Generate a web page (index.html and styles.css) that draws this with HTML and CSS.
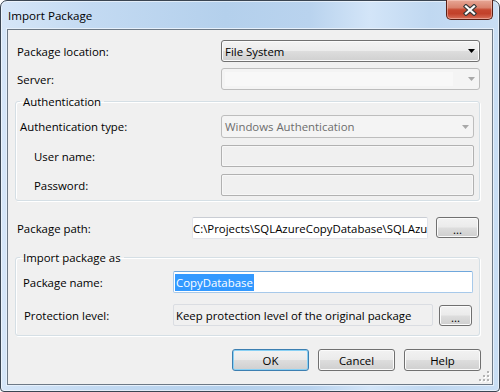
FILE: index.html
```html
<!DOCTYPE html>
<html>
<head>
<meta charset="utf-8">
<title>Import Package</title>
<link rel="stylesheet" href="styles.css">
</head>
<body>
<div class="window">
  <div class="titlebar">
    <span class="title">Import Package</span>
    <div class="close">
      <svg width="14" height="12" viewBox="0 0 14 12">
        <path d="M3 2.5 L11 9.5 M11 2.5 L3 9.5" stroke="#3a3a3a" stroke-width="4.4" stroke-linecap="square" fill="none"/>
        <path d="M3 2.5 L11 9.5 M11 2.5 L3 9.5" stroke="#ffffff" stroke-width="2.2" stroke-linecap="square" fill="none"/>
      </svg>
    </div>
  </div>
  <div class="client">
    <div class="row top r-loc">
      <span class="lbl lbl-top">Package location:</span>
      <div class="combo combo-active w-top">
        <span class="combo-text">File System</span>
        <svg class="arrow" width="7" height="4" viewBox="0 0 7 4"><path d="M0 0 H7 L3.5 4 Z" fill="#000"/></svg>
      </div>
    </div>
    <div class="row top r-server">
      <span class="lbl lbl-top">Server:</span>
      <div class="combo combo-disabled w-top">
        <span class="combo-fill"></span>
        <svg class="arrow" width="7" height="4" viewBox="0 0 7 4"><path d="M0 0 H7 L3.5 4 Z" fill="#a8a8a8"/></svg>
      </div>
    </div>

    <fieldset class="group g-auth">
      <legend>Authentication</legend>
      <div class="row r-authtype">
        <span class="lbl lbl-auth">Authentication type:</span>
        <div class="combo combo-disabled w-auth">
          <span class="combo-text dis-text">Windows Authentication</span>
          <svg class="arrow" width="7" height="4" viewBox="0 0 7 4"><path d="M0 0 H7 L3.5 4 Z" fill="#a8a8a8"/></svg>
        </div>
      </div>
      <div class="row r-user">
        <span class="lbl lbl-auth indent">User name:</span>
        <div class="textbox tb-disabled w-auth"></div>
      </div>
      <div class="row r-pass">
        <span class="lbl lbl-auth indent">Password:</span>
        <div class="textbox tb-disabled w-auth"></div>
      </div>
    </fieldset>

    <div class="row top r-path">
      <span class="lbl lbl-path">Package path:</span>
      <div class="textbox tb-white w-path"><span class="tb-text tb-clip">C:\Projects\SQLAzureCopyDatabase\SQLAzu</span></div>
      <button class="btn btn-dots b-path">...</button>
    </div>

    <fieldset class="group g-import">
      <legend>Import package as</legend>
      <div class="row r-name">
        <span class="lbl lbl-imp pad3">Package name:</span>
        <div class="textbox tb-focus w-name"><span class="tb-text"><span class="sel">CopyDatabase</span></span></div>
      </div>
      <div class="row r-prot">
        <span class="lbl lbl-imp pad4">Protection level:</span>
        <div class="textbox tb-readonly w-prot"><span class="tb-text">Keep protection level of the original package</span></div>
        <button class="btn btn-dots b-prot">...</button>
      </div>
    </fieldset>

    <div class="buttons">
      <button class="btn btn-main btn-default">OK</button>
      <button class="btn btn-main">Cancel</button>
      <button class="btn btn-main">Help</button>
    </div>

    <svg class="grip" width="11" height="11" viewBox="0 0 11 11">
      <g fill="#ffffff">
        <rect x="9" y="1" width="2" height="2"/>
        <rect x="5" y="5" width="2" height="2"/><rect x="9" y="5" width="2" height="2"/>
        <rect x="1" y="9" width="2" height="2"/><rect x="5" y="9" width="2" height="2"/><rect x="9" y="9" width="2" height="2"/>
      </g>
      <g fill="#b3b3b3">
        <rect x="8" y="0" width="2" height="2"/>
        <rect x="4" y="4" width="2" height="2"/><rect x="8" y="4" width="2" height="2"/>
        <rect x="0" y="8" width="2" height="2"/><rect x="4" y="8" width="2" height="2"/><rect x="8" y="8" width="2" height="2"/>
      </g>
    </svg>
  </div>
</div>
</body>
</html>
```

FILE: styles.css
```css
html, body {
  margin: 0;
  padding: 0;
  background: #ffffff;
}

body {
  font-family: "Open Sans", "Noto Sans", sans-serif;
  font-size: 11.4px;
  color: #000;
}

.window {
  width: 500px;
  height: 392px;
  box-sizing: border-box;
  border: 1px solid #3a4552;
  border-radius: 7px 7px 4px 4px;
  background:
    linear-gradient(to right, #d6e6f8 0%, #c3daf2 18%, #b4d0ec 45%, #b9d3ee 62%, #d3e5f8 74%, #c0d8f1 86%, #c9def4 100%);
  box-shadow: inset 0 0 0 1px rgba(255, 255, 255, 0.55);
  padding: 0 6px 6px 6px;
  display: flex;
  flex-direction: column;
}

.titlebar {
  height: 28px;
  flex: 0 0 28px;
  display: flex;
  align-items: center;
  padding-left: 1px;
}

.title {
  font-size: 11.6px;
  color: #000;
  line-height: 15px;
  padding-top: 1px;
}

.close {
  margin-left: auto;
  align-self: flex-start;
  margin-top: -1px;
  width: 47px;
  height: 20px;
  box-sizing: border-box;
  border: 1px solid #5a1f15;
  border-top: none;
  border-radius: 0 0 5px 5px;
  background: linear-gradient(#e7a796 0%, #d9826d 40%, #c6472f 52%, #c2412a 72%, #d8705a 100%);
  box-shadow: inset 0 0 0 1px rgba(255, 220, 210, 0.45);
  display: flex;
  align-items: center;
  justify-content: center;
}

.client {
  flex: 1;
  position: relative;
  border: 1px solid #6d7986;
  background: #f0f0f0;
  padding: 10px 11px 0 7px;
  box-shadow: 0 0 0 1px #e6f0fb;
}

.row {
  display: flex;
  align-items: center;
}

.lbl {
  flex: 0 0 auto;
  box-sizing: border-box;
  white-space: nowrap;
  line-height: 15px;
}

.lbl-top { width: 206px; padding-left: 2px; }
.lbl-path { width: 177px; padding-left: 2px; }
.lbl-auth { width: 201px; }
.lbl-auth.indent { padding-left: 14px; }
.lbl-imp { width: 153px; }
.pad3 { padding-left: 3px; }
.pad4 { padding-left: 4px; }

.r-loc { height: 22px; }
.r-server { margin-top: 6px; height: 22px; }

/* combo boxes */
.combo {
  box-sizing: border-box;
  height: 100%;
  display: flex;
  align-items: center;
  border-radius: 3px;
}

.combo-active {
  border: 1px solid #707070;
  background: linear-gradient(#f3f3f3 0%, #ececec 48%, #dddddd 52%, #d0d0d0 100%);
  box-shadow: inset 0 0 0 1px #fbfbfb;
}

.combo-disabled {
  border: 1px solid #bdbdbd;
  background: #f4f4f4;
}

.combo-text {
  padding-left: 3px;
  white-space: nowrap;
}

.dis-text { color: #6d6d6d; }

.combo-fill {
  align-self: stretch;
  flex: 1;
  margin: 3px 15px 3px 3px;
  background: #f8f8f8;
}

.arrow {
  margin-left: auto;
  margin-right: 4px;
  flex: 0 0 auto;
}

.w-top { width: 259px; }
.w-auth { width: 253px; }
.w-path { width: 236px; }
.w-name { width: 300px; }
.w-prot { width: 260px; }

/* group boxes */
.group {
  margin: 0 1px 0 0;
  border: 1px solid #d5dfe5;
  border-radius: 3px;
  box-shadow: inset 1px 1px 0 #ffffff, 1px 1px 0 #ffffff;
  min-width: 0;
}

.group legend {
  padding: 0 3px;
  line-height: 15px;
  font-size: 11.4px;
}

.g-auth {
  margin-top: 4px;
  padding: 6px 5px 4px 4px;
}

.r-authtype { height: 23px; }
.r-user { margin-top: 7px; height: 22px; }
.r-pass { margin-top: 7px; height: 22px; }

.r-path { margin-top: 16px; height: 22px; align-items: center; }

.g-import {
  margin-top: 11px;
  padding: 6px 5px 9px 4px;
}

.r-name { height: 22px; }
.r-prot { margin-top: 11px; height: 22px; }

/* text boxes */
.textbox {
  box-sizing: border-box;
  height: 100%;
  display: flex;
  align-items: center;
  overflow: hidden;
  border-radius: 2px;
}

.tb-text {
  white-space: nowrap;
  padding-left: 2px;
}

.tb-clip {
  flex: 1;
  min-width: 0;
  overflow: hidden;
}

.tb-disabled {
  border: 1px solid #b1b1b1;
  background: #f0f0f0;
  box-shadow: inset 0 0 0 1px #f7f7f7;
}

.tb-white {
  border: 1px solid #e2e3ea;
  border-top-color: #c9cdd4;
  background: #ffffff;
}

.tb-white .tb-text { padding-left: 0; }

.tb-focus {
  border: 1px solid #a7c9ea;
  border-top-color: #6fa7dc;
  background: #ffffff;
}

.tb-focus .tb-text { padding-left: 1px; }

.sel {
  background: #3399ff;
  color: #ffffff;
  padding: 1px 1px 1px 1px;
}

.tb-readonly {
  border: 1px solid #dadde2;
  background: #f0f0f0;
}

.tb-readonly .tb-text { padding-left: 2px; }

/* buttons */
.btn {
  font-family: "Open Sans", "Noto Sans", sans-serif;
  font-size: 11.4px;
  color: #000;
  box-sizing: border-box;
  border: 1px solid #707070;
  border-radius: 3px;
  background: linear-gradient(#f2f2f2 0%, #ebebeb 48%, #dddddd 52%, #cfcfcf 100%);
  box-shadow: inset 0 0 0 1px #fbfbfb;
  padding: 0;
  margin: 0;
  line-height: 15px;
}

.btn-dots {
  align-self: flex-start;
  line-height: 10px;
  padding-top: 4px;
}

.b-path {
  width: 43px;
  height: 21px;
  margin-left: 8px;
}

.b-prot {
  width: 33px;
  height: 21px;
  margin-left: 6px;
  margin-top: 1px;
}

.buttons {
  display: flex;
  justify-content: flex-end;
  gap: 9px;
  margin-top: 13px;
}

.btn-main {
  width: 77px;
  height: 22px;
}

.btn-default {
  border-color: #3c7fb1;
  box-shadow: inset 0 0 0 1px #88d0f4;
}

.grip {
  position: absolute;
  right: 2px;
  bottom: 2px;
}
```
